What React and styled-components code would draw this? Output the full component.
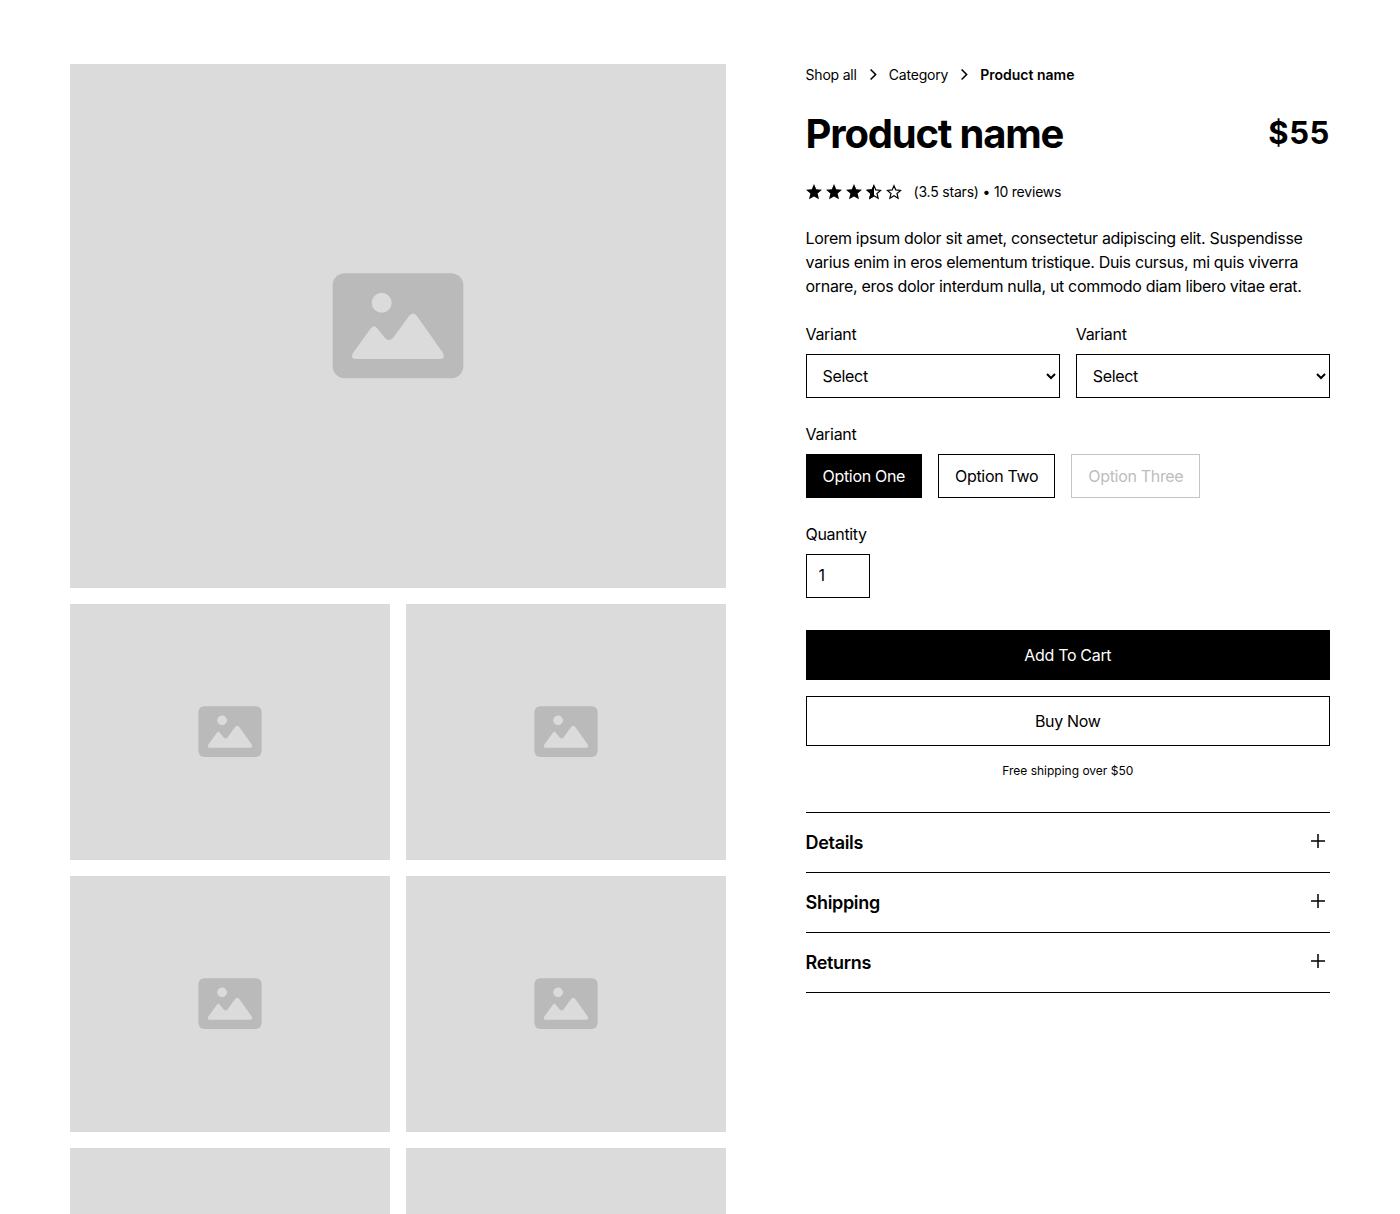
import React from 'react';
import styled, { createGlobalStyle } from 'styled-components';

const GlobalStyle = createGlobalStyle`
  html, body {
    margin: 0;
    height: 100%;
    overflow: hidden;
    background: #fff;
    color: #000;
    font-family: Inter, "Liberation Sans", sans-serif;
    font-size: 16px;
    line-height: 1.5;
    letter-spacing: -0.02em;
  }
  * { box-sizing: border-box; }
`;

const Page = styled.div`
  display: grid;
  grid-template-columns: 1.25fr 1fr;
  gap: 80px;
  align-items: start;
  padding: 64px 70px;
`;

const Gallery = styled.div`
  display: grid;
  grid-template-columns: 1fr 1fr;
  gap: 16px;
`;

const Tile = styled.div`
  display: flex;
  align-items: center;
  justify-content: center;
  background: #dbdbdb;
  height: ${(props) => (props.$main ? '524px' : '256px')};
  grid-column: ${(props) => (props.$main ? '1 / -1' : 'auto')};
`;

const Details = styled.div`
  display: flex;
  flex-direction: column;
`;

const Crumbs = styled.div`
  display: flex;
  align-items: center;
  gap: 8px;
  font-size: 14px;
  line-height: 21px;
  margin-bottom: 25px;
`;

const Crumb = styled.span`
  font-weight: ${(props) => (props.$current ? 600 : 400)};
  letter-spacing: ${(props) => (props.$current ? '0' : '-0.2px')};
`;

const TitleRow = styled.div`
  display: flex;
  justify-content: space-between;
  align-items: flex-start;
  margin-bottom: 23px;
`;

const Title = styled.h1`
  margin: 0;
  font-size: 40px;
  line-height: 48px;
  font-weight: 700;
  letter-spacing: -1.2px;
`;

const Price = styled.div`
  font-size: 31px;
  line-height: 46px;
  font-weight: 700;
  letter-spacing: 0.6px;
`;

const Rating = styled.div`
  display: flex;
  align-items: center;
  gap: 12px;
  font-size: 14px;
  line-height: 21px;
  letter-spacing: -0.2px;
  margin-bottom: 24px;
`;

const Stars = styled.div`
  display: flex;
  gap: 4px;
`;

const Description = styled.p`
  margin: 0 0 24px;
`;

const SelectRow = styled.div`
  display: grid;
  grid-template-columns: 1fr 1fr;
  gap: 16px;
  margin-bottom: 24px;
`;

const Field = styled.div`
  display: flex;
  flex-direction: column;
  margin-bottom: ${(props) => (props.$last ? '32px' : '0')};
`;

const Label = styled.label`
  margin-bottom: 8px;
`;

const Select = styled.select`
  width: 100%;
  height: 44px;
  padding: 8px 12px;
  border: 1px solid #000;
  border-radius: 0;
  background: #fff;
  color: #000;
  font: inherit;
  letter-spacing: inherit;
`;

const Options = styled.div`
  display: flex;
  gap: 16px;
  margin-bottom: 24px;
`;

const Option = styled.div`
  display: flex;
  align-items: center;
  height: 44px;
  padding: 0 16px;
  border: 1px solid ${(props) => (props.$disabled ? '#c4c4c4' : '#000')};
  background: ${(props) => (props.$active ? '#000' : '#fff')};
  color: ${(props) => (props.$active ? '#fff' : props.$disabled ? '#bdbdbd' : '#000')};
`;

const Quantity = styled.input`
  width: 64px;
  height: 44px;
  padding: 8px 12px 10px;
  border: 1px solid #000;
  border-radius: 0;
  outline: none;
  color: #000;
  font: inherit;
  letter-spacing: inherit;
`;

const CartButton = styled.button`
  width: 100%;
  height: 50px;
  margin-bottom: 16px;
  border: 1px solid #000;
  border-radius: 0;
  background: ${(props) => (props.$solid ? '#000' : '#fff')};
  color: ${(props) => (props.$solid ? '#fff' : '#000')};
  font: inherit;
  letter-spacing: inherit;
`;

const Shipping = styled.div`
  margin-bottom: 32px;
  text-align: center;
  font-size: 12px;
  line-height: 18px;
  letter-spacing: 0;
`;

const Accordion = styled.div`
  border-top: 1px solid #000;
`;

const AccordionRow = styled.div`
  display: flex;
  justify-content: space-between;
  align-items: flex-start;
  padding: 16px 0;
  border-bottom: 1px solid #000;
  font-size: 18px;
  line-height: 27px;
  font-weight: 600;
`;

function PlaceholderIcon({ small }) {
  const w = small ? 64 : 132;
  const h = small ? 51.4 : 106;
  return (
    <svg width={w} height={h} viewBox="0 0 132 106">
      <rect x="0.7" y="0.3" width="130.6" height="105" rx="12" fill="#bababa" />
      <circle cx="49.7" cy="29.7" r="10" fill="#dbdbdb" />
      <path
        d="M21 80 L39 55 Q42 51.5 45 55 L53 65 Q57 69 61 65 L77 43 Q81 38 85 43 L111 80 Q113.5 86 108 86 L24 86 Q18 86 21 80 Z"
        fill="#dbdbdb"
      />
    </svg>
  );
}

const fullStar = '8,0 10.2,5.2 16,5.8 11.6,9.6 13,15.3 8,12.4 3,15.3 4.4,9.6 0,5.8 5.8,5.2';
const leftHalf = '8,0 5.8,5.2 0,5.8 4.4,9.6 3,15.3 8,12.4';
const outlineStar = '8,1.7 9.8,5.9 14.7,6.4 11,9.5 12.1,14.2 8,11.8 3.9,14.2 5,9.5 1.3,6.4 6.2,5.9';

function Star({ kind }) {
  return (
    <svg width="16" height="16" viewBox="0 0 16 16">
      {kind === 'full' && <polygon points={fullStar} fill="#000" />}
      {kind !== 'full' && <polygon points={outlineStar} fill="none" stroke="#000" strokeWidth="1.2" />}
      {kind === 'half' && <polygon points={leftHalf} fill="#000" />}
    </svg>
  );
}

function Chevron() {
  return (
    <svg width="16" height="16" viewBox="0 0 16 16" fill="none">
      <path d="M5.6 2.5 L10.6 7.5 L5.6 12.5" stroke="#000" strokeWidth="1.6" />
    </svg>
  );
}

function Plus() {
  return (
    <svg width="24" height="24" viewBox="0 0 24 24" fill="none">
      <path d="M12 5 V19 M5 12 H19" stroke="#000" strokeWidth="1.5" />
    </svg>
  );
}

export default function App() {
  return (
    <>
      <GlobalStyle />
      <Page>
        <Gallery>
          <Tile $main>
            <PlaceholderIcon />
          </Tile>
          {[1, 2, 3, 4, 5, 6].map((n) => (
            <Tile key={n}>
              <PlaceholderIcon small />
            </Tile>
          ))}
        </Gallery>
        <Details>
          <Crumbs>
            <Crumb>Shop all</Crumb>
            <Chevron />
            <Crumb>Category</Crumb>
            <Chevron />
            <Crumb $current>Product name</Crumb>
          </Crumbs>
          <TitleRow>
            <Title>Product name</Title>
            <Price>$55</Price>
          </TitleRow>
          <Rating>
            <Stars>
              <Star kind="full" />
              <Star kind="full" />
              <Star kind="full" />
              <Star kind="half" />
              <Star kind="empty" />
            </Stars>
            <span>(3.5 stars) • 10 reviews</span>
          </Rating>
          <Description>
            Lorem ipsum dolor sit amet, consectetur adipiscing elit. Suspendisse varius enim in eros elementum
            tristique. Duis cursus, mi quis viverra ornare, eros dolor interdum nulla, ut commodo diam libero vitae
            erat.
          </Description>
          <SelectRow>
            <Field>
              <Label>Variant</Label>
              <Select defaultValue="">
                <option value="">Select</option>
              </Select>
            </Field>
            <Field>
              <Label>Variant</Label>
              <Select defaultValue="">
                <option value="">Select</option>
              </Select>
            </Field>
          </SelectRow>
          <Field>
            <Label>Variant</Label>
            <Options>
              <Option $active>Option One</Option>
              <Option>Option Two</Option>
              <Option $disabled>Option Three</Option>
            </Options>
          </Field>
          <Field $last>
            <Label>Quantity</Label>
            <Quantity defaultValue="1" />
          </Field>
          <CartButton $solid>Add To Cart</CartButton>
          <CartButton>Buy Now</CartButton>
          <Shipping>Free shipping over $50</Shipping>
          <Accordion>
            {['Details', 'Shipping', 'Returns'].map((name) => (
              <AccordionRow key={name}>
                {name}
                <Plus />
              </AccordionRow>
            ))}
          </Accordion>
        </Details>
      </Page>
    </>
  );
}
